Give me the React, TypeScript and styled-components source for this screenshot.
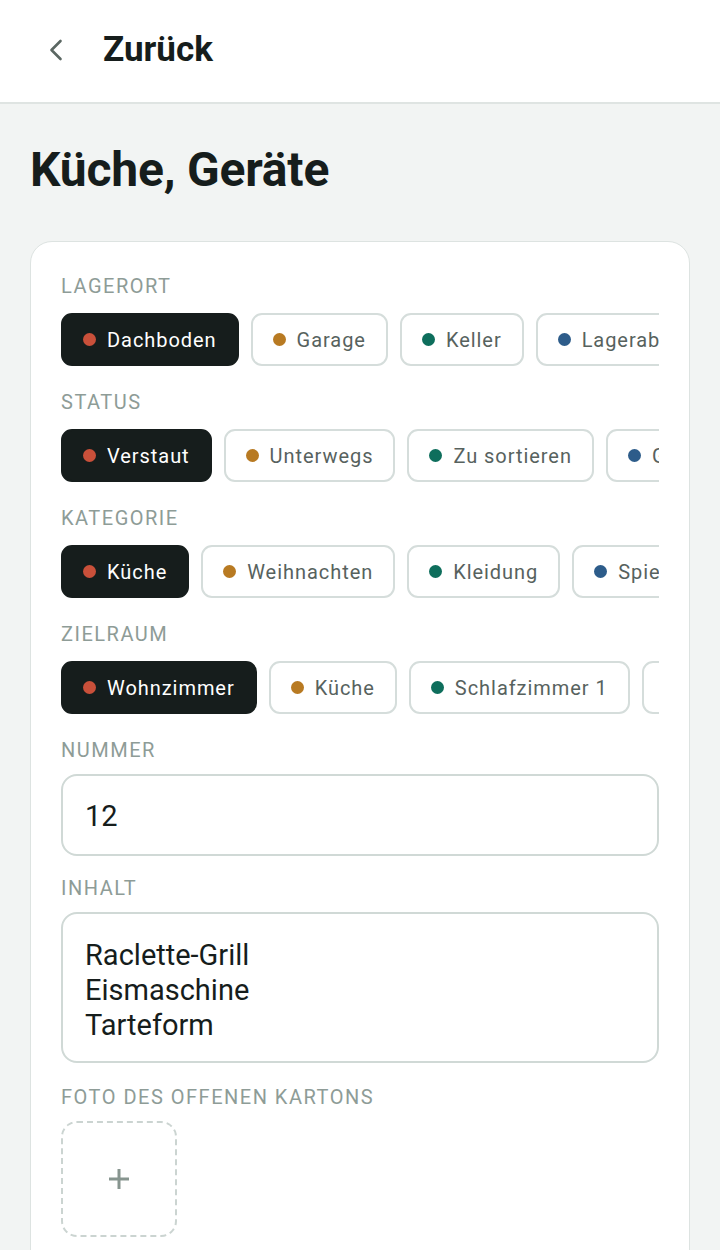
import React from "react";
import styled, { createGlobalStyle } from "styled-components";

const GlobalStyle = createGlobalStyle`
  html, body {
    margin: 0;
    padding: 0;
    background: #f2f4f3;
    font-family: Roboto, "Noto Sans", "Liberation Sans", sans-serif;
    color: #161d1c;
  }
  * { box-sizing: border-box; }
`;

const Page = styled.div`
  min-height: 1250px;
  background: #f2f4f3;
  overflow: hidden;
`;

const Header = styled.header`
  height: 104px;
  background: #ffffff;
  border-bottom: 2px solid #dfe4e2;
  display: flex;
  align-items: center;
  gap: 29px;
  padding: 0 0 2px 38px;
`;

const BackButton = styled.button`
  width: 36px;
  height: 36px;
  padding: 0;
  border: none;
  background: transparent;
  color: #5b6763;
  display: flex;
  align-items: center;
  justify-content: center;
`;

const HeaderTitle = styled.h1`
  margin: 0;
  font-size: 35px;
  line-height: 44px;
  font-weight: 700;
  color: #161d1c;
`;

const PageTitle = styled.h2`
  margin: 38px 30px 0;
  font-size: 48px;
  line-height: 56px;
  font-weight: 700;
  color: #161d1c;
  letter-spacing: -0.2px;
`;

const Card = styled.section`
  margin: 43px 30px 0;
  background: #ffffff;
  border: 1px solid #dde3e1;
  border-radius: 22px;
  padding: 34px 30px 40px;
  display: flex;
  flex-direction: column;
  gap: 24px;
`;

const Field = styled.div<{ $tight?: boolean }>`
  display: flex;
  flex-direction: column;
  min-width: 0;
  margin-top: ${(p) => (p.$tight ? "-2px" : "0")};
`;

const Label = styled.div`
  font-size: 20px;
  line-height: 20px;
  letter-spacing: 1.5px;
  color: #8e9c97;
  text-transform: uppercase;
  margin-bottom: 14px;
`;

const ChipRow = styled.div`
  display: flex;
  gap: 12px;
  padding: 3px 0 2px;
  overflow-x: auto;
  scrollbar-width: none;
  &::-webkit-scrollbar { display: none; }
`;

const Chip = styled.button<{ $active?: boolean }>`
  flex: 0 0 auto;
  height: 53px;
  display: flex;
  align-items: center;
  gap: 11px;
  padding: 0 20px;
  border-radius: 11px;
  border: 2px solid ${(p) => (p.$active ? "#161d1c" : "#d5dddb")};
  background: ${(p) => (p.$active ? "#161d1c" : "#ffffff")};
  color: ${(p) => (p.$active ? "#ffffff" : "#57625e")};
  font-family: Roboto, "Noto Sans", sans-serif;
  font-size: 20px;
  letter-spacing: 0.95px;
  white-space: nowrap;
`;

const Dot = styled.span<{ $color: string }>`
  width: 13px;
  height: 13px;
  border-radius: 50%;
  background: ${(p) => p.$color};
  flex: 0 0 auto;
`;

const TextInput = styled.input`
  width: 100%;
  height: 82px;
  border: 2px solid #d0d9d6;
  border-radius: 16px;
  padding: 2px 22px 0;
  font-family: Roboto, "Noto Sans", sans-serif;
  font-size: 29px;
  color: #161d1c;
  background: #fff;
  outline: none;
`;

const TextArea = styled.textarea`
  width: 100%;
  height: 151px;
  border: 2px solid #d0d9d6;
  border-radius: 16px;
  padding: 24px 22px 16px;
  font-family: Roboto, "Noto Sans", sans-serif;
  font-size: 29px;
  line-height: 35px;
  color: #161d1c;
  background: #fff;
  resize: none;
  outline: none;
  display: block;
`;

const PhotoBox = styled.button`
  width: 116px;
  height: 116px;
  border: 2px dashed #cbd4d1;
  border-radius: 16px;
  background: #ffffff;
  display: flex;
  align-items: center;
  justify-content: center;
  padding: 0;
  color: #87958f;
`;

const COLORS = ["#c9503a", "#b87a22", "#0e6e5c", "#2d5c8a", "#7a4f9a"];

const groups: { label: string; items: string[] }[] = [
  { label: "Lagerort", items: ["Dachboden", "Garage", "Keller", "Lagerabteil"] },
  { label: "Status", items: ["Verstaut", "Unterwegs", "Zu sortieren", "Gepackt"] },
  { label: "Kategorie", items: ["Küche", "Weihnachten", "Kleidung", "Spielzeug"] },
  { label: "Zielraum", items: ["Wohnzimmer", "Küche", "Schlafzimmer 1", "Schlafzimmer 2"] },
];

export default function App() {
  return (
    <Page>
      <GlobalStyle />
      <Header>
        <BackButton aria-label="Zurück">
          <svg width="36" height="36" viewBox="0 0 24 24" fill="none" stroke="currentColor" strokeWidth="1.75" strokeLinecap="round" strokeLinejoin="round">
            <path d="m15 18-6-6 6-6" />
          </svg>
        </BackButton>
        <HeaderTitle>Zurück</HeaderTitle>
      </Header>
      <PageTitle>Küche, Geräte</PageTitle>
      <Card>
        {groups.map((g) => (
          <Field key={g.label}>
            <Label>{g.label}</Label>
            <ChipRow>
              {g.items.map((item, i) => (
                <Chip key={item} $active={i === 0}>
                  <Dot $color={COLORS[i]} />
                  {item}
                </Chip>
              ))}
            </ChipRow>
          </Field>
        ))}
        <Field>
          <Label>Nummer</Label>
          <TextInput defaultValue="12" />
        </Field>
        <Field $tight>
          <Label>Inhalt</Label>
          <TextArea defaultValue={"Raclette-Grill\nEismaschine\nTarteform"} />
        </Field>
        <Field>
          <Label>Foto des offenen Kartons</Label>
          <PhotoBox aria-label="Foto hinzufügen">
            <svg width="20" height="20" viewBox="0 0 20 20" fill="none" stroke="currentColor" strokeWidth="3">
              <path d="M0 10h20M10 0v20" />
            </svg>
          </PhotoBox>
        </Field>
      </Card>
    </Page>
  );
}
